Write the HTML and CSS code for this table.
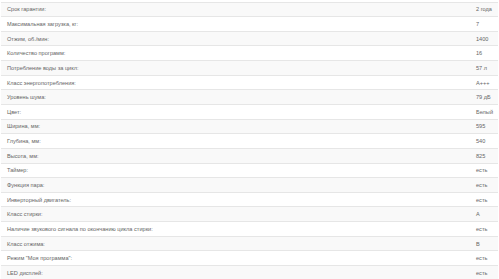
FILE: index.html
```html
<!DOCTYPE html>
<html lang="ru">
<head>
<meta charset="utf-8">
<title>Характеристики</title>
<link rel="stylesheet" href="styles.css">
</head>
<body>
<table class="specs">
<tbody>
<tr><td class="name">Срок гарантии:</td><td class="val">2 года</td></tr>
<tr><td class="name">Максимальная загрузка, кг:</td><td class="val">7</td></tr>
<tr><td class="name">Отжим, об./мин:</td><td class="val">1400</td></tr>
<tr><td class="name">Количество программ:</td><td class="val">16</td></tr>
<tr><td class="name">Потребление воды за цикл:</td><td class="val">57 л</td></tr>
<tr><td class="name">Класс энергопотребления:</td><td class="val">A+++</td></tr>
<tr><td class="name">Уровень шума:</td><td class="val">79 дБ</td></tr>
<tr><td class="name">Цвет:</td><td class="val">Белый</td></tr>
<tr><td class="name">Ширина, мм:</td><td class="val">595</td></tr>
<tr><td class="name">Глубина, мм:</td><td class="val">540</td></tr>
<tr><td class="name">Высота, мм:</td><td class="val">825</td></tr>
<tr><td class="name">Таймер:</td><td class="val">есть</td></tr>
<tr><td class="name">Функция пара:</td><td class="val">есть</td></tr>
<tr><td class="name">Инверторный двигатель:</td><td class="val">есть</td></tr>
<tr><td class="name">Класс стирки:</td><td class="val">A</td></tr>
<tr><td class="name">Наличие звукового сигнала по окончанию цикла стирки:</td><td class="val">есть</td></tr>
<tr><td class="name">Класс отжима:</td><td class="val">B</td></tr>
<tr><td class="name">Режим "Моя программа":</td><td class="val">есть</td></tr>
<tr><td class="name">LED дисплей:</td><td class="val">есть</td></tr>
</tbody>
</table>
</body>
</html>
```
FILE: styles.css
```css
html, body {
  margin: 0;
  padding: 0;
  background: #fff;
}
body {
  padding: 1.5px 1px 0 1px;
  font-family: "Liberation Sans", Arial, sans-serif;
  font-size: 5.6px;
  color: #666;
}
.specs {
  width: 497px;
  border-collapse: collapse;
  border-spacing: 0;
}
.specs td {
  height: 14.65px;
  box-sizing: border-box;
  padding: 0 6px;
  border-top: 1px solid #e6e6e6;
  vertical-align: middle;
  line-height: 8px;
  white-space: nowrap;
}
.specs tr:nth-child(odd) td {
  background: #f9f9f9;
}
.specs .val {
  width: 22px;
  padding-left: 0;
  padding-right: 0;
}
```
